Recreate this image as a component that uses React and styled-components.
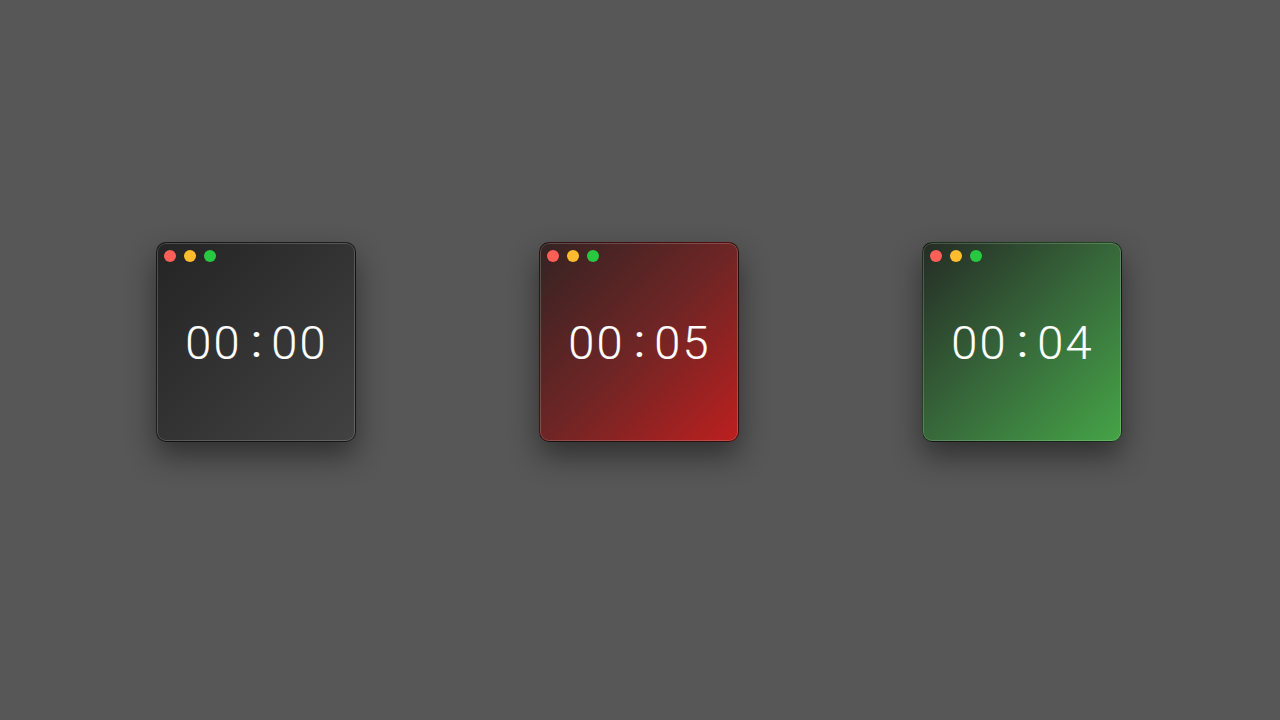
import React from 'react';
import styled, { createGlobalStyle } from 'styled-components';

const GlobalStyle = createGlobalStyle`
  html, body {
    margin: 0;
    padding: 0;
    background: #575757;
  }
  body {
    font-family: Roboto, "Liberation Sans", sans-serif;
  }
`;

const Stage = styled.div`
  width: 1280px;
  height: 720px;
  box-sizing: border-box;
  padding: 0 3px 36px 0;
  display: flex;
  align-items: center;
  justify-content: center;
  gap: 183px;
  background: #575757;
`;

const Window = styled.div`
  position: relative;
  width: 200px;
  height: 200px;
  box-sizing: border-box;
  border-radius: 10px;
  border: 1px solid rgba(0, 0, 0, 0.55);
  background: ${props => props.bg};
  box-shadow:
    inset 0 0 0 1px rgba(255, 255, 255, 0.18),
    0 14px 30px rgba(0, 0, 0, 0.45);
  display: flex;
  align-items: center;
  justify-content: center;
`;

const TitleBar = styled.div`
  position: absolute;
  top: 7px;
  left: 7px;
  display: flex;
  gap: 8px;
`;

const Light = styled.span`
  width: 12px;
  height: 12px;
  border-radius: 50%;
  background: ${props => props.color};
`;

const Time = styled.div`
  color: #ffffff;
  font-family: Roboto, "Liberation Sans", sans-serif;
  font-weight: 300;
  font-size: 47px;
  letter-spacing: 2.2px;
  line-height: 1;
  display: flex;
  align-items: center;
  padding-left: 2px;
  -webkit-text-stroke: 0.15px #ffffff;
`;

const Colon = styled.span`
  margin: 0 7px 0 9px;
  font-weight: 400;
  position: relative;
  top: -2px;
`;

const timers = [
  { bg: 'linear-gradient(135deg, #242424 0%, #333333 50%, #424242 100%)', min: '00', sec: '00' },
  { bg: 'linear-gradient(135deg, #342323 0%, #6e2525 50%, #bd1f1f 100%)', min: '00', sec: '05' },
  { bg: 'linear-gradient(135deg, #252c25 0%, #37683a 50%, #45a447 100%)', min: '00', sec: '04' },
];

function Timer({ bg, min, sec }) {
  return (
    <Window bg={bg}>
      <TitleBar>
        <Light color="#ff5f57" />
        <Light color="#febc2e" />
        <Light color="#28c840" />
      </TitleBar>
      <Time>
        {min}
        <Colon>:</Colon>
        {sec}
      </Time>
    </Window>
  );
}

export default function App() {
  return (
    <>
      <GlobalStyle />
      <Stage>
        {timers.map((t, i) => (
          <Timer key={i} {...t} />
        ))}
      </Stage>
    </>
  );
}
